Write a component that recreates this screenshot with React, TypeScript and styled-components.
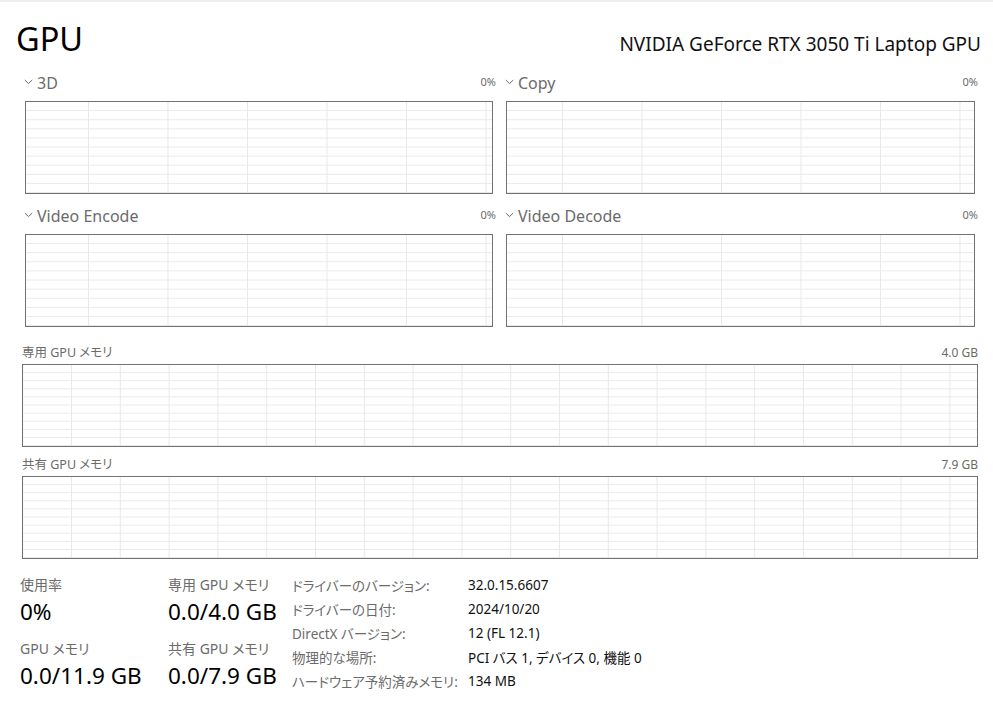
import React from 'react';
import styled, { createGlobalStyle } from 'styled-components';

const GlobalStyle = createGlobalStyle`
  html, body {
    margin: 0;
    padding: 0;
    background: #ffffff;
  }
  body {
    font-family: "Noto Sans", "Noto Sans CJK JP", sans-serif;
    color: #000;
    font-feature-settings: "palt";
  }
`;

interface Engine {
  name: string;
  value: string;
}

const engines: Engine[] = [
  { name: '3D', value: '0%' },
  { name: 'Copy', value: '0%' },
  { name: 'Video Encode', value: '0%' },
  { name: 'Video Decode', value: '0%' },
];

const memories = [
  { name: '専用 GPU メモリ', value: '4.0 GB' },
  { name: '共有 GPU メモリ', value: '7.9 GB' },
];

const stats = [
  { label: '使用率', value: '0%' },
  { label: '専用 GPU メモリ', value: '0.0/4.0 GB' },
  { label: 'GPU メモリ', value: '0.0/11.9 GB' },
  { label: '共有 GPU メモリ', value: '0.0/7.9 GB' },
];

const details = [
  { label: 'ドライバーのバージョン:', value: '32.0.15.6607' },
  { label: 'ドライバーの日付:', value: '2024/10/20' },
  { label: 'DirectX バージョン:', value: '12 (FL 12.1)' },
  { label: '物理的な場所:', value: 'PCI バス 1, デバイス 0, 機能 0' },
  { label: 'ハードウェア予約済みメモリ:', value: '134 MB' },
];

function Chevron() {
  return (
    <ChevronIcon viewBox="0 0 9 6" aria-hidden="true">
      <polyline points="0.8,1 4.5,4.6 8.2,1" fill="none" stroke="#6b6b6b" strokeWidth="1" />
    </ChevronIcon>
  );
}

export default function App() {
  return (
    <>
      <GlobalStyle />
      <Page>
        <TopStrip />
        <Header>
          <Title>GPU</Title>
          <DeviceName>NVIDIA GeForce RTX 3050 Ti Laptop GPU</DeviceName>
        </Header>

        <EngineGrid>
          {engines.map((e, i) => (
            <EngineCell key={e.name}>
              <EngineLabelRow>
                <EngineName>
                  <Chevron />
                  {e.name}
                </EngineName>
                <SmallValue>{e.value}</SmallValue>
              </EngineLabelRow>
              <Chart $offset={i % 2 === 0 ? 62 : 55} $step={79.5} $height={93} />
            </EngineCell>
          ))}
        </EngineGrid>

        <MemorySection>
          {memories.map((m) => (
            <MemoryBlock key={m.name}>
              <MemoryLabelRow>
                <MemoryName>{m.name}</MemoryName>
                <MemoryValue>{m.value}</MemoryValue>
              </MemoryLabelRow>
              <Chart $offset={48} $step={48.8} $height={83} />
            </MemoryBlock>
          ))}
        </MemorySection>

        <Bottom>
          <StatGrid>
            {stats.map((s) => (
              <Stat key={s.label}>
                <StatLabel>{s.label}</StatLabel>
                <StatValue>{s.value}</StatValue>
              </Stat>
            ))}
          </StatGrid>
          <DetailTable>
            {details.map((d) => (
              <React.Fragment key={d.label}>
                <DetailLabel>{d.label}</DetailLabel>
                <DetailValue>{d.value}</DetailValue>
              </React.Fragment>
            ))}
          </DetailTable>
        </Bottom>
      </Page>
    </>
  );
}

const Page = styled.div`
  width: 993px;
  height: 717px;
  overflow: hidden;
  display: flex;
  flex-direction: column;
`;

const TopStrip = styled.div`
  height: 2px;
  background: #f0f0f0;
`;

const Header = styled.div`
  display: flex;
  justify-content: space-between;
  align-items: baseline;
  padding: 13px 12px 0 16px;
`;

const Title = styled.div`
  font-size: 32.5px;
  line-height: 48px;
  color: #000;
`;

const DeviceName = styled.div`
  font-size: 19px;
  color: #111;
`;

const EngineGrid = styled.div`
  display: grid;
  grid-template-columns: 472px 473px;
  column-gap: 9px;
  row-gap: 12px;
  padding-left: 24px;
  margin-top: 10px;
`;

const EngineCell = styled.div`
  display: flex;
  flex-direction: column;
`;

const EngineLabelRow = styled.div`
  display: flex;
  justify-content: space-between;
  align-items: baseline;
  height: 20px;
  margin-bottom: 8px;
`;

const EngineName = styled.span`
  font-size: 16px;
  line-height: 20px;
  color: #6b6b6b;
  display: inline-flex;
  align-items: center;
`;

const ChevronIcon = styled.svg`
  width: 9px;
  height: 6px;
  margin: 0 4px 0 0;
  position: relative;
  top: -1px;
`;

const SmallValue = styled.span`
  font-size: 11px;
  color: #6b6b6b;
`;

const Chart = styled.div<{ $offset: number; $step: number; $height: number }>`
  box-sizing: border-box;
  height: ${(p) => p.$height}px;
  margin: 0 3px 0 1px;
  border: 1px solid #727272;
  background-color: #fff;
  background-image: linear-gradient(to top, #e8e8e8 1px, transparent 1px),
    linear-gradient(to right, #e8e8e8 1px, transparent 1px);
  background-size: 100% 10%, ${(p) => p.$step}px 100%;
  background-position: 0 0, ${(p) => p.$offset}px 0;
`;

const MemorySection = styled.div`
  display: flex;
  flex-direction: column;
  gap: 10px;
  padding: 0 15px 0 22px;
  margin-top: 18px;

  ${Chart} {
    margin: 0;
  }
`;

const MemoryBlock = styled.div`
  display: flex;
  flex-direction: column;
`;

const MemoryLabelRow = styled.div`
  display: flex;
  justify-content: space-between;
  align-items: baseline;
  height: 16px;
  margin-bottom: 3px;
`;

const MemoryName = styled.span`
  font-size: 12.5px;
  line-height: 16px;
  color: #6b6b6b;
`;

const MemoryValue = styled.span`
  font-size: 12px;
  line-height: 16px;
  color: #6b6b6b;
`;

const Bottom = styled.div`
  display: flex;
  align-items: flex-start;
  padding-left: 20px;
  margin-top: 14px;
`;

const StatGrid = styled.div`
  display: grid;
  grid-template-columns: 148px 124px;
  row-gap: 10px;
  margin-top: 1px;
`;

const Stat = styled.div`
  display: flex;
  flex-direction: column;
`;

const StatLabel = styled.div`
  font-size: 14px;
  line-height: 22px;
  color: #6b6b6b;
`;

const StatValue = styled.div`
  font-size: 22.5px;
  line-height: 32px;
  color: #000;
  white-space: nowrap;
`;

const DetailTable = styled.div`
  display: grid;
  grid-template-columns: 176px auto;
  grid-auto-rows: 24px;
  align-items: center;
`;

const DetailLabel = styled.div`
  font-size: 13.5px;
  color: #6b6b6b;
  white-space: nowrap;
`;

const DetailValue = styled.div`
  font-size: 13.5px;
  color: #111;
  white-space: nowrap;
`;
